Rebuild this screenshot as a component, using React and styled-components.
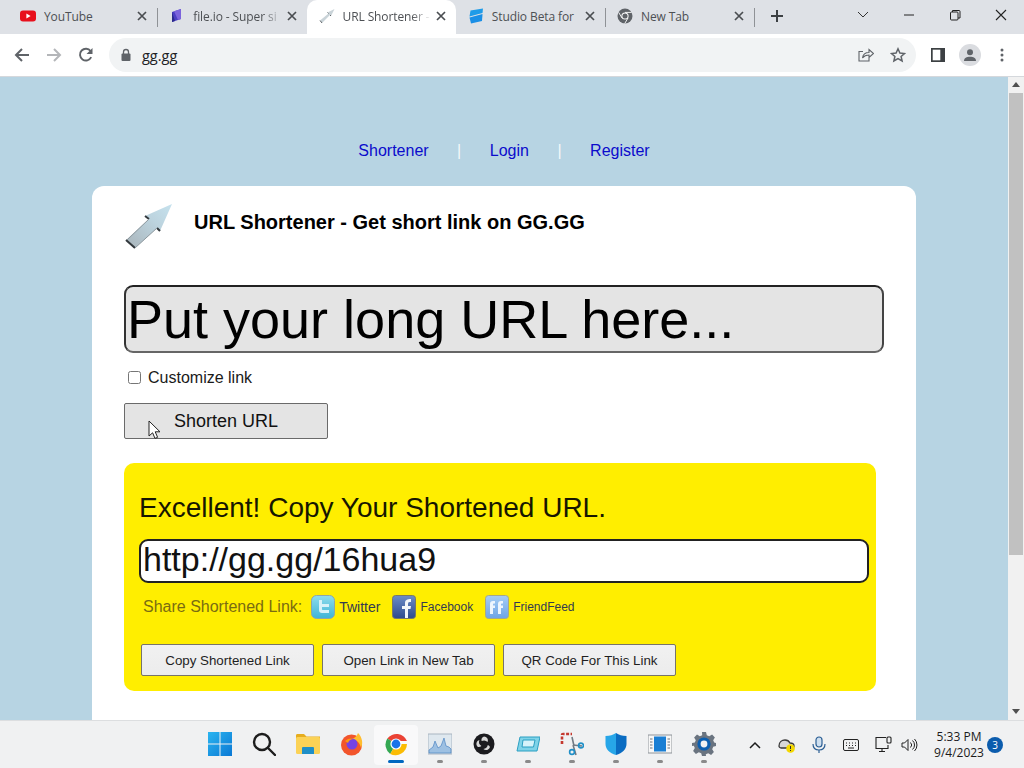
import React from "react";
import styled, { createGlobalStyle } from "styled-components";

const Global = createGlobalStyle`
  html, body { margin: 0; padding: 0; overflow: hidden; }
  * { box-sizing: border-box; }
  body { font-family: "Liberation Sans", Arial, sans-serif; }
`;

const Screen = styled.div`
  position: relative;
  width: 1024px;
  height: 768px;
  display: flex;
  flex-direction: column;
  overflow: hidden;
  background: #fff;
`;

/* ---------- tab strip ---------- */
const TabStrip = styled.div`
  height: 34px;
  flex: none;
  display: flex;
  padding-left: 8px;
  background: #dee1e6;
`;
const Tab = styled.div`
  position: relative;
  width: 149.25px;
  height: 34px;
  flex: none;
  display: flex;
  align-items: center;
  padding: 0 8px 2px 12px;
  background: ${(p) => (p.$active ? "#ffffff" : "transparent")};
  border-radius: ${(p) => (p.$active ? "10px 10px 0 0" : "0")};
  &::after {
    content: "";
    display: ${(p) => (p.$sep ? "block" : "none")};
    position: absolute;
    right: -0.5px;
    top: 8px;
    width: 1px;
    height: 19px;
    background: #8f9296;
  }
`;
const FavSlot = styled.span`
  width: 16px;
  height: 16px;
  flex: none;
  display: flex;
  margin-right: 8px;
`;
const TabTitle = styled.span`
  flex: 1;
  min-width: 0;
  font: 12px "Open Sans", sans-serif;
  letter-spacing: -0.1px;
  color: #4d5054;
  white-space: nowrap;
  overflow: hidden;
  ${(p) => p.$fade && "mask-image: linear-gradient(to right, #000 78%, transparent 100%);"}
`;
const TabClose = styled.span`
  width: 14px;
  height: 14px;
  margin-left: 3px;
  flex: none;
  display: flex;
`;
const NewTab = styled.div`
  width: 46px;
  height: 34px;
  padding-bottom: 2px;
  flex: none;
  display: flex;
  align-items: center;
  justify-content: center;
`;
const WindowButtons = styled.div`
  margin-left: auto;
  display: flex;
  height: 30px;
`;
const WinBtn = styled.div`
  width: 46px;
  height: 30px;
  display: flex;
  align-items: center;
  justify-content: center;
`;

/* ---------- toolbar ---------- */
const Toolbar = styled.div`
  height: 43px;
  flex: none;
  display: flex;
  align-items: center;
  padding: 0 0 0 6px;
  background: #fff;
  border-bottom: 1px solid #d5d8dc;
`;
const ToolBtn = styled.div`
  width: 32px;
  height: 32px;
  flex: none;
  display: flex;
  align-items: center;
  justify-content: center;
`;
const Omnibox = styled.div`
  width: 807px;
  height: 34px;
  margin: 0 6px 0 7px;
  flex: none;
  display: flex;
  align-items: center;
  padding-left: 11px;
  background: #f1f3f4;
  border-radius: 17px;
`;
const Url = styled.span`
  margin-left: 10px;
  font: 14.5px "Open Sans", sans-serif;
  color: #202124;
`;
const OmniEnd = styled.div`
  margin-left: auto;
  display: flex;
  padding-right: 2px;
`;
const OmniBtn = styled.div`
  width: 32px;
  height: 28px;
  display: flex;
  align-items: center;
  justify-content: center;
`;
const Avatar = styled.div`
  width: 22px;
  height: 22px;
  border-radius: 50%;
  background: #dadce0;
  display: flex;
  align-items: center;
  justify-content: center;
`;

/* ---------- page ---------- */
const Body = styled.div`
  flex: 1;
  min-height: 0;
  display: flex;
`;
const Page = styled.main`
  flex: 1;
  min-width: 0;
  background: #b7d4e3;
  padding-top: 64px;
  overflow: hidden;
`;
const Nav = styled.nav`
  height: 20px;
  display: flex;
  justify-content: center;
  align-items: center;
  font-size: 16px;
  margin-bottom: 25px;
`;
const NavLink = styled.a`
  color: #0b0bcc;
  text-decoration: none;
`;
const NavBar = styled.span`
  margin: 0 28.5px;
  color: #f4f8fa;
`;
const Card = styled.section`
  width: 824px;
  margin: 0 0 0 92px;
  height: 600px;
  background: #fff;
  border-radius: 12px;
  padding: 17px 32px 0;
`;
const Head = styled.div`
  display: flex;
  align-items: flex-start;
  height: 82px;
`;
const Logo = styled.div`
  width: 70px;
  height: 46px;
  flex: none;
`;
const Title = styled.h1`
  margin: 7px 0 0;
  font-size: 20px;
  line-height: 24px;
  font-weight: 700;
  color: #000;
`;
const LongInput = styled.div`
  width: 760px;
  height: 68px;
  display: flex;
  align-items: center;
  padding-left: 1px;
  border: 2px solid;
  border-color: #222 #444 #666 #333;
  border-radius: 9px;
  background: #e4e4e4;
  font-size: 54px;
  color: #000;
  white-space: nowrap;
`;
const CheckRow = styled.label`
  display: flex;
  align-items: center;
  height: 20px;
  margin: 15px 0 0 4px;
  font-size: 16px;
  color: #1a1a1a;
`;
const CheckBox = styled.span`
  width: 13px;
  height: 13px;
  margin: -2px 7px 0 0;
  border: 1px solid #767676;
  border-radius: 2.5px;
  background: #fff;
`;
const ShortenBtn = styled.div`
  width: 204px;
  height: 36px;
  margin-top: 15px;
  display: flex;
  align-items: center;
  justify-content: center;
  font-size: 18px;
  color: #111;
  background: #e4e4e4;
  border: 1px solid #6a6a6a;
  border-radius: 2px;
`;
const Result = styled.div`
  width: 752px;
  height: 228px;
  margin-top: 24px;
  padding: 29px 7px 0 15px;
  background: #ffee00;
  border-radius: 10px;
`;
const ResultTitle = styled.div`
  font-size: 28px;
  line-height: 32px;
  color: #161600;
`;
const ShortInput = styled.div`
  width: 730px;
  height: 44px;
  margin-top: 15px;
  display: flex;
  align-items: center;
  padding: 0 0 3px 2px;
  background: #fff;
  border: 2px solid #222;
  border-radius: 9px;
  font-size: 34px;
  color: #111;
`;
const ShareRow = styled.div`
  display: flex;
  align-items: center;
  height: 26px;
  margin: 11px 0 0 4px;
`;
const ShareLabel = styled.span`
  font-size: 16px;
  color: #7a6c12;
  margin-right: 9px;
`;
const ShareIcon = styled.span`
  width: 24px;
  height: 24px;
  display: flex;
  margin-right: 4px;
`;
const ShareText = styled.a`
  font-size: ${(p) => p.$size || 12}px;
  color: #333b50;
  margin-right: 12px;
`;
const ActionRow = styled.div`
  display: flex;
  gap: 8px;
  margin: 24px 0 0 2px;
`;
const ActionBtn = styled.div`
  width: 173px;
  height: 32px;
  display: flex;
  align-items: center;
  justify-content: center;
  font-size: 13.33px;
  color: #1f1f1f;
  background: linear-gradient(#f1f1f1, #ececec);
  border: 1px solid #77746a;
  border-radius: 2px;
`;

/* ---------- scrollbar ---------- */
const Scrollbar = styled.div`
  width: 16px;
  flex: none;
  display: flex;
  flex-direction: column;
  align-items: center;
  background: #f1f1f1;
`;
const ScrollArrow = styled.div`
  height: 16px;
  flex: none;
  display: flex;
  align-items: center;
  justify-content: center;
`;
const ScrollThumb = styled.div`
  width: 14px;
  height: 462px;
  background: #c1c1c1;
`;
const ScrollFill = styled.div`
  flex: 1;
`;

/* ---------- taskbar ---------- */
const Taskbar = styled.footer`
  height: 48px;
  flex: none;
  display: flex;
  align-items: center;
  padding-left: 198px;
  background: #f0f1f2;
  border-top: 1px solid #dcdee0;
`;
const TaskItem = styled.div`
  width: 44px;
  height: 40px;
  flex: none;
  display: flex;
  flex-direction: column;
  align-items: center;
  justify-content: flex-start;
  padding-top: 7px;
  border-radius: 4px;
  background: ${(p) => (p.$active ? "#f9f9fa" : "transparent")};
`;
const TaskGlyph = styled.div`
  width: 24px;
  height: 24px;
  display: flex;
  align-items: center;
  justify-content: center;
`;
const TaskDot = styled.div`
  margin-top: 4px;
  height: 3px;
  border-radius: 2px;
  width: ${(p) => (p.$active ? 16 : 6)}px;
  background: ${(p) => (p.$active ? "#0067c0" : p.$none ? "transparent" : "#8a8a8a")};
`;
const Tray = styled.div`
  margin-left: 13px;
  display: flex;
  align-items: center;
  height: 47px;
`;
const TrayIcon = styled.div`
  width: ${(p) => p.$w || 32}px;
  height: 24px;
  flex: none;
  display: flex;
  align-items: center;
  justify-content: center;
`;
const Clock = styled.div`
  width: 66px;
  margin-left: 7px;
  font: 12px/16px "Open Sans", sans-serif;
  color: #1b1b1b;
  text-align: center;
`;
const Badge = styled.div`
  width: 16px;
  height: 16px;
  margin-left: -5px;
  border-radius: 50%;
  background: #0b5cad;
  color: #fff;
  font: 10px/16px "Open Sans", sans-serif;
  text-align: center;
`;

const CursorOverlay = styled.div`
  position: absolute;
  left: 148px;
  top: 420px;
  width: 14px;
  height: 20px;
`;

/* ---------- drawings ---------- */
const Close = ({ c = "#4a4d51" }) => (
  <svg width="14" height="14" viewBox="0 0 14 14" stroke={c} strokeWidth="1.7" fill="none">
    <path d="M3 3l8 8M11 3l-8 8" />
  </svg>
);
const YouTubeFav = () => (
  <svg width="16" height="16" viewBox="0 0 16 16">
    <rect y="2.5" width="16" height="11" rx="3" fill="#e8101c" />
    <path d="M6.4 5.6v4.8L10.6 8z" fill="#fff" />
  </svg>
);
const FileFav = () => (
  <svg width="16" height="16" viewBox="0 0 16 16">
    <path d="M3 4l9-3v10l-9 3z" fill="#4b3fc4" />
    <path d="M5 3.3l7-2.3v10l-3 1z" fill="#7b63dc" />
    <path d="M3 4v10l3-1z" fill="#2b2a8c" />
  </svg>
);
const ArrowFav = () => (
  <svg width="16" height="16" viewBox="0 0 16 16">
    <path d="M15.5 1L8.5 4.5l1 1L1 12.5 3 15l8-8 1 1z" fill="#c9d3d8" />
    <path d="M1 12.5L3 15M8.5 4.5l1 1M11 7l1 1" stroke="#55595c" strokeWidth="0.9" fill="none" />
  </svg>
);
const StudioFav = () => (
  <svg width="16" height="16" viewBox="0 0 16 16">
    <path d="M2.5 2.5L15 0.5l-0.5 4.5L1.5 8.5z" fill="#1e9be8" />
    <path d="M1.5 9.5L14.5 6l-.5 7-11 2.5z" fill="#1a8fe6" />
  </svg>
);
const ChromeGrey = ({ s = 16 }) => (
  <svg width={s} height={s} viewBox="0 0 16 16">
    <circle cx="8" cy="8" r="7.5" fill="#5f6368" />
    <circle cx="8" cy="8" r="3.6" fill="#fff" />
    <circle cx="8" cy="8" r="2.6" fill="#5f6368" />
    <path d="M8 4.4h6.6M5 10l-3.3-5.6M11 10l-3.3 5.6" stroke="#fff" strokeWidth="0.9" />
  </svg>
);
const Plus = () => (
  <svg width="14" height="14" viewBox="0 0 14 14" stroke="#3c4043" strokeWidth="2">
    <path d="M7 1v12M1 7h12" />
  </svg>
);
const Back = ({ c = "#5f6368" }) => (
  <svg width="16" height="16" viewBox="0 0 16 16" fill="none" stroke={c} strokeWidth="2">
    <path d="M15 8H2M8 2L2 8l6 6" />
  </svg>
);
const Forward = () => (
  <svg width="16" height="16" viewBox="0 0 16 16" fill="none" stroke="#b4b6b9" strokeWidth="2">
    <path d="M1 8h13M8 2l6 6-6 6" />
  </svg>
);
const Reload = () => (
  <svg width="16" height="16" viewBox="0 0 16 16" fill="none">
    <path d="M13.2 10.2A5.9 5.9 0 1 1 12.6 4" stroke="#5f6368" strokeWidth="1.9" />
    <path d="M14.5 1v6h-6z" fill="#5f6368" />
  </svg>
);
const LockIcon = () => (
  <svg width="12" height="14" viewBox="0 0 12 14" fill="none">
    <rect x="1.5" y="5.5" width="9" height="7.5" rx="1" fill="#5f6368" />
    <path d="M3.5 6V4a2.5 2.5 0 0 1 5 0v2" stroke="#5f6368" strokeWidth="1.3" />
  </svg>
);
const ShareGlyph = () => (
  <svg width="16" height="16" viewBox="0 0 16 16" fill="none" stroke="#5f6368" strokeWidth="1.1">
    <path d="M11 7.5v6.5H1V4.5h4M4.5 11c.5-3.5 3-5.5 6.5-5.5V2.5L15.5 6.5 11 10.5V8c-3 0-5 1-6.5 3z" />
  </svg>
);
const StarGlyph = () => (
  <svg width="16" height="16" viewBox="0 0 16 16" fill="none" stroke="#5f6368" strokeWidth="1.5">
    <path d="M8 1.8l1.9 4.2 4.6.5-3.4 3 1 4.5-4.1-2.4L3.9 14l1-4.5-3.4-3 4.6-.5z" />
  </svg>
);
const SidePanel = () => (
  <svg width="14" height="14" viewBox="0 0 14 14">
    <rect width="14" height="14" fill="#3c4043" />
    <rect x="1.7" y="1.7" width="7.6" height="10.6" fill="#fff" />
  </svg>
);
const Person = () => (
  <svg width="14" height="14" viewBox="0 0 14 14" fill="#5f6368">
    <circle cx="7" cy="4.2" r="3" />
    <path d="M1 13c0-3 2.6-4.3 6-4.3S13 10 13 13z" />
  </svg>
);
const Kebab = () => (
  <svg width="4" height="14" viewBox="0 0 4 14" fill="#5f6368">
    <circle cx="2" cy="2" r="1.5" />
    <circle cx="2" cy="7" r="1.5" />
    <circle cx="2" cy="12" r="1.5" />
  </svg>
);
const ArrowLogo = () => (
  <svg width="48" height="46" viewBox="0 0 48 46">
    <defs>
      <linearGradient id="lg" x1="0" y1="1" x2="1" y2="0">
        <stop offset="0" stopColor="#a9b4ba" />
        <stop offset="0.6" stopColor="#bcd3de" />
        <stop offset="1" stopColor="#c6e2ee" />
      </linearGradient>
    </defs>
    <path d="M48 1L21 13l4 3L2 37l9 8 22-20 3 3z" fill="url(#lg)" />
    <path d="M21 13l4 3M33 25l3 3M2 37l9 8" stroke="#33393d" strokeWidth="2" fill="none" />
    <path d="M25 16L3 37M11 45l22-20" stroke="#8c979d" strokeWidth="1" fill="none" />
  </svg>
);
const Twitter = () => (
  <svg width="24" height="24" viewBox="0 0 24 24">
    <defs>
      <linearGradient id="tw" x1="0" y1="0" x2="0" y2="1">
        <stop offset="0" stopColor="#8edcec" />
        <stop offset="1" stopColor="#3fb4d6" />
      </linearGradient>
    </defs>
    <rect x="0.5" y="0.5" width="23" height="23" rx="5" fill="url(#tw)" stroke="#8ea6a6" />
    <path d="M8 5v10c0 2 1 3 3 3h7v-3h-6c-.7 0-1-.3-1-1v-2h7V9h-7V5z" fill="#d8f2f8" />
  </svg>
);
const Facebook = () => (
  <svg width="24" height="24" viewBox="0 0 24 24">
    <defs>
      <linearGradient id="fb" x1="0" y1="0" x2="0" y2="1">
        <stop offset="0" stopColor="#6c8cc8" />
        <stop offset="1" stopColor="#2e4a8c" />
      </linearGradient>
    </defs>
    <rect x="0.5" y="0.5" width="23" height="23" rx="3" fill="url(#fb)" stroke="#77776a" />
    <path d="M13 23v-9h-3v-3h3V8c0-3 2-4 6-4v3c-2 0-3 0-3 2v2h3l-.5 3H16v9z" fill="#f2f5fa" />
  </svg>
);
const FriendFeed = () => (
  <svg width="24" height="24" viewBox="0 0 24 24">
    <defs>
      <linearGradient id="ff" x1="0" y1="0" x2="0" y2="1">
        <stop offset="0" stopColor="#a6cdf4" />
        <stop offset="1" stopColor="#6ea4e6" />
      </linearGradient>
    </defs>
    <rect x="0.5" y="0.5" width="23" height="23" rx="3" fill="url(#ff)" stroke="#a5a88a" />
    <path d="M5 19V9c0-2 1-3 3-3h2v2.5H9c-.6 0-1 .3-1 1v1h2V13H8v6zM13 19V9c0-2 1-3 3-3h2v2.5h-1c-.6 0-1 .3-1 1v1h2V13h-2v6z" fill="#eef5fd" />
  </svg>
);
const Cursor = () => (
  <svg width="14" height="20" viewBox="0 0 14 20">
    <path d="M1 1v15l3.6-3.2 2.4 5.6 2.6-1.1-2.4-5.5H12z" fill="#fff" stroke="#222" strokeWidth="1" />
  </svg>
);
const ScrollTri = ({ down }) => (
  <svg width="8" height="6" viewBox="0 0 8 6" fill="#505050">
    <path d={down ? "M0 0h8L4 5z" : "M0 5h8L4 0z"} />
  </svg>
);

const WinLogo = () => (
  <svg width="24" height="24" viewBox="0 0 24 24">
    <defs>
      <linearGradient id="wl" x1="0" y1="0" x2="1" y2="1">
        <stop offset="0" stopColor="#2bb5f0" />
        <stop offset="1" stopColor="#0a78d4" />
      </linearGradient>
    </defs>
    <path d="M0 0h11.5v11.5H0zM12.5 0H24v11.5H12.5zM0 12.5h11.5V24H0zM12.5 12.5H24V24H12.5z" fill="url(#wl)" />
  </svg>
);
const SearchGlyph = () => (
  <svg width="24" height="24" viewBox="0 0 24 24" fill="none" stroke="#1d1d1d" strokeWidth="2.4">
    <circle cx="10" cy="10" r="8" />
    <path d="M16 16l7 7" strokeLinecap="round" />
  </svg>
);
const FolderGlyph = () => (
  <svg width="24" height="24" viewBox="0 0 24 24">
    <path d="M0 3.5C0 2.5.6 2 1.5 2H8l2.5 2.5H24V8H0z" fill="#e6ad1f" />
    <rect y="5" width="24" height="17" rx="1.5" fill="#fbd256" />
    <path d="M7 15h10a1 1 0 0 1 1 1v6H6v-6a1 1 0 0 1 1-1z" fill="#1f8fc7" />
  </svg>
);
const FirefoxGlyph = () => (
  <svg width="24" height="24" viewBox="0 0 24 24">
    <circle cx="11.5" cy="13" r="10.5" fill="#f2552c" />
    <path d="M18 1c4 4 5.5 10 3 15-1-5-4-8-9-9 3-1 5-3 6-6z" fill="#ffbd2e" />
    <circle cx="12" cy="12" r="5.5" fill="#7542e5" />
    <path d="M5 9c3-3 7-3 9-2-3 0-5 1-6 4z" fill="#ff980e" />
  </svg>
);
const ChromeColor = () => (
  <svg width="24" height="24" viewBox="0 0 24 24">
    <path d="M12 12L3.3 6.5A11.5 11.5 0 0 1 23 9H12z" fill="#ea4335" />
    <path d="M12 12l-5.8 9.9A11.5 11.5 0 0 1 3.3 6.5z" fill="#34a853" />
    <path d="M12 12H23a11.5 11.5 0 0 1-16.8 9.9z" fill="#fbbc04" />
    <circle cx="12" cy="12" r="5.6" fill="#fff" />
    <circle cx="12" cy="12" r="4.4" fill="#1a73e8" />
  </svg>
);
const TaskMgr = () => (
  <svg width="24" height="24" viewBox="0 0 24 24">
    <rect y="2" width="24" height="20" fill="#dfe8ef" stroke="#a9b6c2" />
    <path d="M1 18l4-3 2-6 3 7 3-2 3-8 2 8 3 1 2 2v4H1z" fill="#9dc0e2" stroke="#3c78bd" strokeWidth="0.6" />
  </svg>
);
const ObsGlyph = () => (
  <svg width="24" height="24" viewBox="0 0 24 24">
    <circle cx="12" cy="12" r="10.5" fill="#1b1b1f" />
    <path d="M12 4.5a4 4 0 0 1 3.6 5.6 5 5 0 0 0-6-1A4 4 0 0 1 12 4.5zM5.8 15a4 4 0 0 1 1.6-7 5 5 0 0 0 2 6 4 4 0 0 1-3.6 1zM18 15a4 4 0 0 1-6.6 2 5 5 0 0 0 4.4-4 4 4 0 0 1 2.2 2z" fill="#d8d8d8" />
  </svg>
);
const ScreenGlyph = () => (
  <svg width="24" height="24" viewBox="0 0 24 24">
    <path d="M4 5h20l-3 14H1z" fill="#7fd3e8" stroke="#2b9fc2" strokeWidth="1" />
    <path d="M7 8h12l-1.5 7H6z" fill="#d6f3fa" stroke="#2b9fc2" strokeWidth="1" />
  </svg>
);
const SnipGlyph = () => (
  <svg width="24" height="24" viewBox="0 0 24 24" fill="none">
    <path d="M2 12V3a1 1 0 0 1 1-1h9" stroke="#c5392f" strokeWidth="2.6" strokeDasharray="3 1.5" />
    <path d="M12 5l2 9M16 23l-3-10" stroke="#707a85" strokeWidth="1.6" />
    <path d="M13 13l9 1" stroke="#707a85" strokeWidth="1.6" />
    <circle cx="12" cy="20" r="2.4" stroke="#1f8fc7" strokeWidth="1.6" />
    <circle cx="21" cy="13.5" r="2.4" stroke="#1f8fc7" strokeWidth="1.6" />
  </svg>
);
const ShieldGlyph = () => (
  <svg width="24" height="24" viewBox="0 0 24 24">
    <path d="M12 1c3 2 6 3 10.5 3v8c0 5-4 9-10.5 11z" fill="#0a6cc2" />
    <path d="M12 1C9 3 6 4 1.5 4v8c0 5 4 9 10.5 11z" fill="#27a6e8" />
  </svg>
);
const PanelGlyph = () => (
  <svg width="24" height="24" viewBox="0 0 24 24">
    <rect y="3" width="24" height="18" fill="#f7f7f7" stroke="#8e9499" />
    <rect x="6" y="4.5" width="12" height="15" fill="#1a7fd4" />
    <path d="M2 7h2.5M2 10h2.5M2 13h2.5M2 16h2.5M19.5 7H22M19.5 10H22M19.5 13H22M19.5 16H22" stroke="#6e767d" />
  </svg>
);
const GearGlyph = () => (
  <svg width="24" height="24" viewBox="0 0 24 24">
    <path d="M10 0h4l.8 3.2 2.4 1 2.9-1.7 2.8 2.9-1.7 2.8 1 2.4L24 11v3l-2.8.8-1 2.4 1.7 2.9-2.8 2.8-2.9-1.7-2.4 1L14 24h-4l-.8-2.8-2.4-1-2.9 1.7L1.1 19l1.7-2.9-1-2.4L0 14v-3l2.8-.4 1-2.4L2.1 5.4 5 2.5l2.8 1.7 2.4-1z" fill="#6a7480" />
    <circle cx="12" cy="12" r="6.6" fill="#0c5fb0" />
    <circle cx="12" cy="12" r="3.4" fill="#f0f1f2" />
  </svg>
);
const Caret = () => (
  <svg width="12" height="8" viewBox="0 0 12 8" fill="none" stroke="#1c1c1c" strokeWidth="1.5">
    <path d="M1 7l5-5 5 5" />
  </svg>
);
const CloudWarn = () => (
  <svg width="18" height="16" viewBox="0 0 18 16">
    <path d="M1 9c0-4 3-6 6-6 2 0 4 1 5 3 2 0 4 1 4 3 0 1-1 2-2 2H3c-1 0-2-1-2-2z" fill="#d8d8d8" stroke="#3a3a3a" strokeWidth="1.3" />
    <circle cx="12.5" cy="11.5" r="4.3" fill="#f4d800" />
    <path d="M12.5 9v3M12.5 13v1" stroke="#333" strokeWidth="1" />
  </svg>
);
const Mic = () => (
  <svg width="14" height="18" viewBox="0 0 14 18" fill="none" stroke="#2c5f94" strokeWidth="1.2">
    <rect x="4" y="1" width="6" height="10" rx="3" fill="#cfe0f0" />
    <path d="M1 8c0 4 2.5 6 6 6s6-2 6-6M7 14v3" />
  </svg>
);
const Keyboard = () => (
  <svg width="16" height="12" viewBox="0 0 16 12" fill="none" stroke="#222">
    <rect x="0.5" y="0.5" width="15" height="11" rx="1.5" />
    <path d="M3 4h1M6 4h1M9 4h1M12 4h1M3 6.5h1M6 6.5h1M9 6.5h1M12 6.5h1M5 9h6" />
  </svg>
);
const Net = () => (
  <svg width="17" height="17" viewBox="0 0 17 17" fill="none" stroke="#222" strokeWidth="1.1">
    <path d="M11 1.5H1v11h12V9M4 15.5h6M7 12.5v3" />
    <rect x="12" y="1" width="4" height="6" rx="1" />
  </svg>
);
const Speaker = () => (
  <svg width="17" height="14" viewBox="0 0 17 14" fill="none" stroke="#222" strokeWidth="1">
    <path d="M1 5h2.5L7 1.5v11L3.5 9H1zM9.5 4.5a3.5 3.5 0 0 1 0 5M11.5 2.5a6 6 0 0 1 0 9M13.5 1a8.5 8.5 0 0 1 0 12" />
  </svg>
);

const tabs = [
  { title: "YouTube", icon: <YouTubeFav /> },
  { title: "file.io - Super si", icon: <FileFav />, fade: true },
  { title: "URL Shortener - ", icon: <ArrowFav />, fade: true, active: true },
  { title: "Studio Beta for", icon: <StudioFav />, sep: true },
  { title: "New Tab", icon: <ChromeGrey />, sep: true },
];

const taskIcons = [
  [<WinLogo />, false, true],
  [<SearchGlyph />, false, true],
  [<FolderGlyph />, false, true],
  [<FirefoxGlyph />, false, true],
  [<ChromeColor />, true, false],
  [<TaskMgr />, false, false],
  [<ObsGlyph />, false, false],
  [<ScreenGlyph />, false, false],
  [<SnipGlyph />, false, false],
  [<ShieldGlyph />, false, false],
  [<PanelGlyph />, false, false],
  [<GearGlyph />, false, false],
];

export default function App() {
  return (
    <Screen>
      <Global />
      <TabStrip>
        {tabs.map((t, i) => (
          <Tab key={t.title} $active={t.active} $sep={t.sep || i === 0}>
            <FavSlot>{t.icon}</FavSlot>
            <TabTitle $fade={t.fade}>{t.title}</TabTitle>
            <TabClose>
              <Close />
            </TabClose>
          </Tab>
        ))}
        <NewTab>
          <Plus />
        </NewTab>
        <WindowButtons>
          <WinBtn>
            <svg width="12" height="8" viewBox="0 0 12 8" fill="none" stroke="#333" strokeWidth="1">
              <path d="M1 1l5 5 5-5" />
            </svg>
          </WinBtn>
          <WinBtn>
            <svg width="12" height="2" viewBox="0 0 12 2" stroke="#222">
              <path d="M1 1h10" />
            </svg>
          </WinBtn>
          <WinBtn>
            <svg width="12" height="12" viewBox="0 0 12 12" fill="none" stroke="#222">
              <rect x="1.5" y="3" width="7.5" height="8" rx="1" />
              <path d="M3.5 3V1.5h6.5a1 1 0 0 1 1 1V9H9" />
            </svg>
          </WinBtn>
          <WinBtn>
            <svg width="12" height="12" viewBox="0 0 12 12" stroke="#222" strokeWidth="1.1">
              <path d="M1 1l10 10M11 1L1 11" />
            </svg>
          </WinBtn>
        </WindowButtons>
      </TabStrip>

      <Toolbar>
        <ToolBtn>
          <Back />
        </ToolBtn>
        <ToolBtn>
          <Forward />
        </ToolBtn>
        <ToolBtn>
          <Reload />
        </ToolBtn>
        <Omnibox>
          <LockIcon />
          <Url>gg.gg</Url>
          <OmniEnd>
            <OmniBtn>
              <ShareGlyph />
            </OmniBtn>
            <OmniBtn>
              <StarGlyph />
            </OmniBtn>
          </OmniEnd>
        </Omnibox>
        <ToolBtn>
          <SidePanel />
        </ToolBtn>
        <ToolBtn>
          <Avatar>
            <Person />
          </Avatar>
        </ToolBtn>
        <ToolBtn>
          <Kebab />
        </ToolBtn>
      </Toolbar>

      <Body>
        <Page>
          <Nav>
            <NavLink>Shortener</NavLink>
            <NavBar>|</NavBar>
            <NavLink>Login</NavLink>
            <NavBar>|</NavBar>
            <NavLink>Register</NavLink>
          </Nav>
          <Card>
            <Head>
              <Logo>
                <ArrowLogo />
              </Logo>
              <Title>URL Shortener - Get short link on GG.GG</Title>
            </Head>
            <LongInput>Put your long URL here...</LongInput>
            <CheckRow>
              <CheckBox />
              Customize link
            </CheckRow>
            <ShortenBtn>Shorten URL</ShortenBtn>
            <Result>
              <ResultTitle>Excellent! Copy Your Shortened URL.</ResultTitle>
              <ShortInput>http://gg.gg/16hua9</ShortInput>
              <ShareRow>
                <ShareLabel>Share Shortened Link:</ShareLabel>
                <ShareIcon>
                  <Twitter />
                </ShareIcon>
                <ShareText $size={14}>Twitter</ShareText>
                <ShareIcon>
                  <Facebook />
                </ShareIcon>
                <ShareText>Facebook</ShareText>
                <ShareIcon>
                  <FriendFeed />
                </ShareIcon>
                <ShareText>FriendFeed</ShareText>
              </ShareRow>
              <ActionRow>
                <ActionBtn>Copy Shortened Link</ActionBtn>
                <ActionBtn>Open Link in New Tab</ActionBtn>
                <ActionBtn>QR Code For This Link</ActionBtn>
              </ActionRow>
            </Result>
          </Card>
        </Page>
        <Scrollbar>
          <ScrollArrow>
            <ScrollTri />
          </ScrollArrow>
          <ScrollThumb />
          <ScrollFill />
          <ScrollArrow>
            <ScrollTri down />
          </ScrollArrow>
        </Scrollbar>
      </Body>

      <Taskbar>
        {taskIcons.map(([icon, active, none], i) => (
          <TaskItem key={i} $active={active}>
            <TaskGlyph>{icon}</TaskGlyph>
            <TaskDot $active={active} $none={none} />
          </TaskItem>
        ))}
        <Tray>
          <TrayIcon>
            <Caret />
          </TrayIcon>
          <TrayIcon>
            <CloudWarn />
          </TrayIcon>
          <TrayIcon>
            <Mic />
          </TrayIcon>
          <TrayIcon>
            <Keyboard />
          </TrayIcon>
          <TrayIcon>
            <Net />
          </TrayIcon>
          <TrayIcon $w={20}>
            <Speaker />
          </TrayIcon>
          <Clock>
            5:33 PM
            <br />
            9/4/2023
          </Clock>
          <Badge>3</Badge>
        </Tray>
      </Taskbar>

      <CursorOverlay>
        <Cursor />
      </CursorOverlay>
    </Screen>
  );
}
